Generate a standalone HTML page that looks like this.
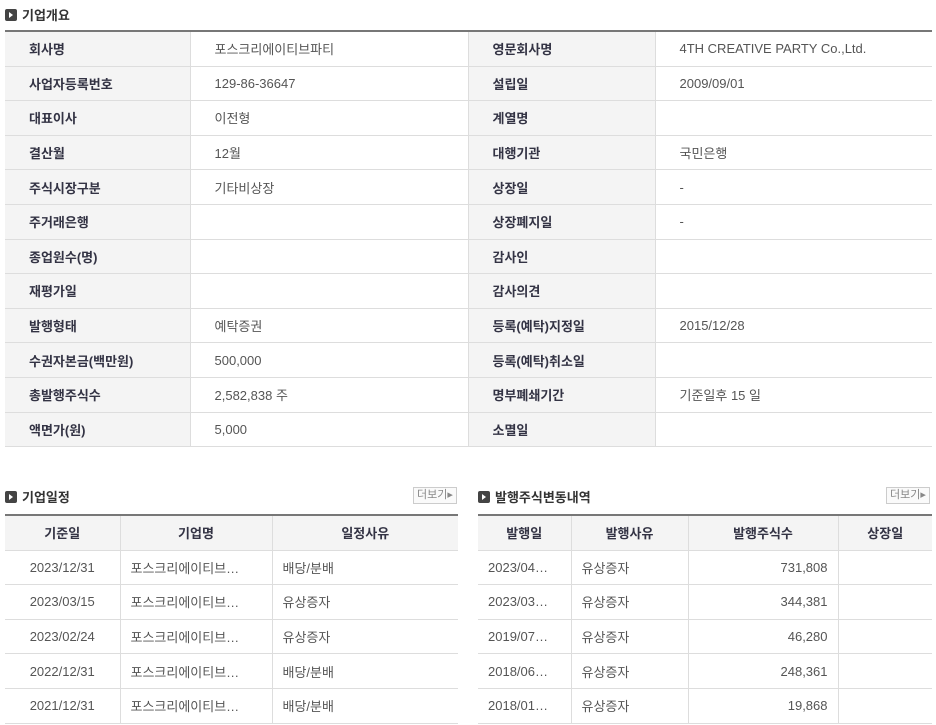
<!DOCTYPE html>
<html><head><meta charset="utf-8"><style>
body{margin:0;background:#fff;font-family:"Liberation Sans","Noto Sans CJK KR",sans-serif;font-size:13px;color:#555;width:936px;height:725px;overflow:hidden;position:relative}
.t{position:absolute;font-size:13px;font-weight:bold;color:#333;display:flex;align-items:center;gap:5px}
.ic{width:12px;height:12px;background:#444;border-radius:2px;position:relative;display:inline-block}
.ic:after{content:"";position:absolute;left:4px;top:3px;border-left:4px solid #fff;border-top:3px solid transparent;border-bottom:3px solid transparent}
table{position:absolute;border-collapse:collapse;table-layout:fixed}
td,th{border:1px solid #ddd;padding:0;height:33.6px;white-space:nowrap;overflow:hidden}
tr:first-child td,tr:first-child th{border-top:2px solid #777}
td:first-child,th:first-child{border-left:none}td:last-child,th:last-child{border-right:none}
.l{background:#f4f4f4;font-weight:bold;color:#334;padding-left:24px}
.v{padding-left:24px}
th{background:#f4f4f4;color:#334;font-weight:bold}
.c{text-align:center}.r{text-align:right;padding-right:10px}.p{padding-left:10px}
.more{position:absolute;font-size:11px;color:#888;border:1px solid #ccc;padding:0 3px;height:15px;line-height:15px;background:#fafafa}
</style></head><body>
<div class="t" style="left:5px;top:5px"><span class="ic"></span>기업개요</div>
<table style="left:5px;top:30px;width:927px">
<colgroup><col style="width:185px"><col style="width:278px"><col style="width:187px"><col style="width:277px"></colgroup>
<tr><td class="l">회사명</td><td class="v">포스크리에이티브파티</td><td class="l">영문회사명</td><td class="v">4TH CREATIVE PARTY Co.,Ltd.</td></tr>
<tr><td class="l">사업자등록번호</td><td class="v">129-86-36647</td><td class="l">설립일</td><td class="v">2009/09/01</td></tr>
<tr><td class="l">대표이사</td><td class="v">이전형</td><td class="l">계열명</td><td class="v"></td></tr>
<tr><td class="l">결산월</td><td class="v">12월</td><td class="l">대행기관</td><td class="v">국민은행</td></tr>
<tr><td class="l">주식시장구분</td><td class="v">기타비상장</td><td class="l">상장일</td><td class="v">-</td></tr>
<tr><td class="l">주거래은행</td><td class="v"></td><td class="l">상장폐지일</td><td class="v">-</td></tr>
<tr><td class="l">종업원수(명)</td><td class="v"></td><td class="l">감사인</td><td class="v"></td></tr>
<tr><td class="l">재평가일</td><td class="v"></td><td class="l">감사의견</td><td class="v"></td></tr>
<tr><td class="l">발행형태</td><td class="v">예탁증권</td><td class="l">등록(예탁)지정일</td><td class="v">2015/12/28</td></tr>
<tr><td class="l">수권자본금(백만원)</td><td class="v">500,000</td><td class="l">등록(예탁)취소일</td><td class="v"></td></tr>
<tr><td class="l">총발행주식수</td><td class="v">2,582,838 주</td><td class="l">명부폐쇄기간</td><td class="v">기준일후 15 일</td></tr>
<tr><td class="l">액면가(원)</td><td class="v">5,000</td><td class="l">소멸일</td><td class="v"></td></tr>
</table>

<div class="t" style="left:5px;top:487px"><span class="ic"></span>기업일정</div>
<div class="more" style="left:413px;top:487px">더보기▸</div>
<table style="left:5px;top:514px;width:453px">
<colgroup><col style="width:115px"><col style="width:152px"><col style="width:186px"></colgroup>
<tr><th>기준일</th><th>기업명</th><th>일정사유</th></tr>
<tr><td class="c">2023/12/31</td><td class="p">포스크리에이티브…</td><td class="p">배당/분배</td></tr>
<tr><td class="c">2023/03/15</td><td class="p">포스크리에이티브…</td><td class="p">유상증자</td></tr>
<tr><td class="c">2023/02/24</td><td class="p">포스크리에이티브…</td><td class="p">유상증자</td></tr>
<tr><td class="c">2022/12/31</td><td class="p">포스크리에이티브…</td><td class="p">배당/분배</td></tr>
<tr><td class="c">2021/12/31</td><td class="p">포스크리에이티브…</td><td class="p">배당/분배</td></tr>
</table>

<div class="t" style="left:478px;top:487px"><span class="ic"></span>발행주식변동내역</div>
<div class="more" style="left:886px;top:487px">더보기▸</div>
<table style="left:478px;top:514px;width:454px">
<colgroup><col style="width:93px"><col style="width:117px"><col style="width:150px"><col style="width:94px"></colgroup>
<tr><th>발행일</th><th>발행사유</th><th>발행주식수</th><th>상장일</th></tr>
<tr><td class="p">2023/04…</td><td class="p">유상증자</td><td class="r">731,808</td><td></td></tr>
<tr><td class="p">2023/03…</td><td class="p">유상증자</td><td class="r">344,381</td><td></td></tr>
<tr><td class="p">2019/07…</td><td class="p">유상증자</td><td class="r">46,280</td><td></td></tr>
<tr><td class="p">2018/06…</td><td class="p">유상증자</td><td class="r">248,361</td><td></td></tr>
<tr><td class="p">2018/01…</td><td class="p">유상증자</td><td class="r">19,868</td><td></td></tr>
</table>
</body></html>
